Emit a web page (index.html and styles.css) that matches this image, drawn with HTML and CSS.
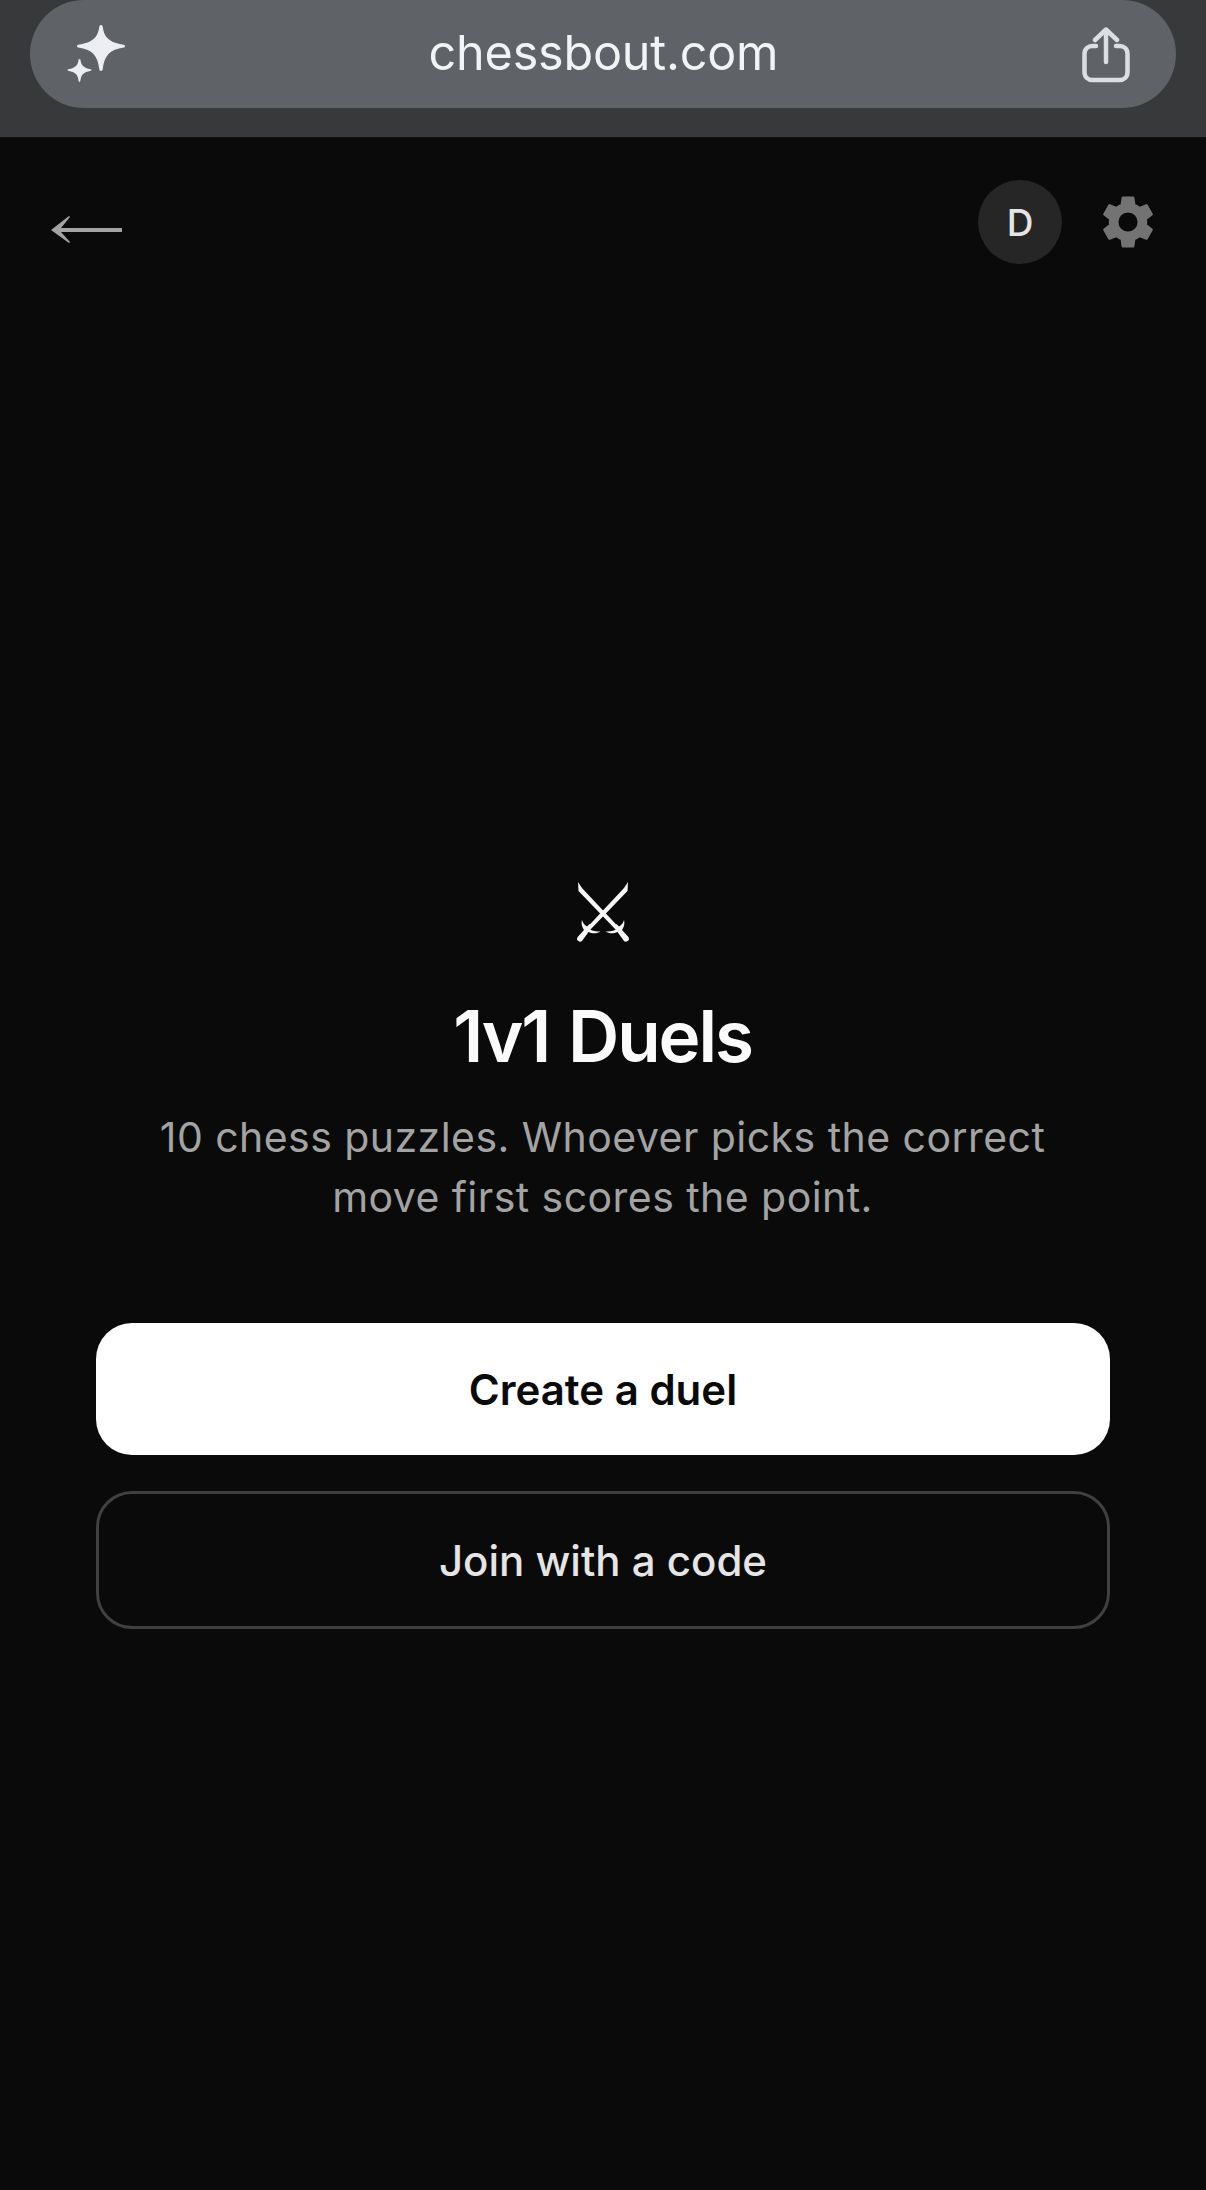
FILE: index.html
```html
<!DOCTYPE html>
<html lang="en">
<head>
    <meta charset="UTF-8">
    <meta name="viewport" content="width=device-width, initial-scale=1.0">
    <title>1v1 Duels</title>
    <link rel="stylesheet" href="styles.css">
</head>
<body>
    <div class="browser-bar">
        <div class="url-pill">
            <svg class="sparkle-icon" viewBox="0 0 58 58">
                <path fill="#eceef2" d="M34 0c1 0 1.600.7 1.800 2 1.400 10.500 6 15.200 21 17.800.8.200 1.200.7 1.200 1.400s-.4 1.200-1.200 1.400c-13.800 2.200-19.400 7.700-21 21.200-.2 1.500-.8 2.200-1.800 2.200s-1.600-.7-1.800-2.200c-1.600-13.500-7.200-19-21-21.200-.8-.2-1.200-.7-1.200-1.400s.4-1.200 1.200-1.400c15-2.600 19.600-7.300 21-17.800.2-1.300.8-2 1.800-2z" />
                <path fill="#eceef2" d="M12.500 34c.6 0 .9.400 1 1 .8 5.500 2.800 7.700 10.200 9.300.5.100.8.400.8.700s-.3.600-.8.700c-7.400 1.600-9.400 3.800-10.200 9.300-.1 1-.4 2-1 2s-.9-1-1-2c-.8-5.500-2.800-7.700-10.200-9.300-.5-.1-.8-.4-.8-.7s.3-.6.800-.7c7.400-1.600 9.400-3.800 10.200-9.300.1-.6.400-1 1-1z" />
            </svg>
            <span class="url-text">chessbout.com</span>
            <svg class="share-icon" viewBox="0 0 48 56" fill="none" stroke="#dcdee2" stroke-width="4.500" stroke-linecap="round" stroke-linejoin="round">
                <path d="M14 19h-3.500C6 19 2.500 22 2.500 27v18c0 5 3.500 8 8 8h27c4.500 0 8-3 8-8V27c0-5-3.500-8-8-8H34" />
                <path d="M24 35V3M13 13 24 2.500 35 13" />
            </svg>
        </div>
    </div>

    <div class="page">
        <div class="top-nav">
            <svg class="back-arrow" viewBox="0 0 72 28">
                <path fill="#a3a3a3" d="M0 14 18 0l1 1-9 11h61v4H10l9 10-1 1z" />
            </svg>
            <div class="top-actions">
                <div class="avatar">D</div>
                <svg class="gear-icon" viewBox="0 0 24 24">
                    <path fill="#737373" fill-rule="evenodd" d="M19.140 12.940c.04-.3.060-.61.060-.94 0-.32-.02-.64-.070-.94l2.030-1.580a.5.5 0 0 0 .12-.61l-1.920-3.320a.49.49 0 0 0-.59-.22l-2.390.96c-.5-.38-1.030-.7-1.620-.94l-.36-2.540a.48.48 0 0 0-.48-.41h-3.840a.47.47 0 0 0-.47.41l-.36 2.540c-.59.24-1.130.57-1.620.94l-2.390-.96a.48.48 0 0 0-.59.22L2.740 8.870a.47.47 0 0 0 .12.61l2.030 1.580c-.05.3-.09.63-.09.94s.02.64.070.94l-2.030 1.580a.5.5 0 0 0-.12.61l1.920 3.320c.12.22.37.29.59.22l2.390-.96c.5.38 1.030.7 1.620.94l.36 2.540c.05.24.24.41.48.41h3.840c.24 0 .44-.17.47-.41l.36-2.540c.59-.24 1.130-.56 1.620-.94l2.390.96c.22.080.47 0 .59-.22l1.920-3.320a.46.46 0 0 0-.12-.61l-2.010-1.580zM12 15.600A3.610 3.610 0 0 1 8.400 12 3.610 3.610 0 0 1 12 8.400a3.610 3.610 0 0 1 3.600 3.600 3.610 3.610 0 0 1-3.600 3.600z" />
                </svg>
            </div>
        </div>

        <div class="duel-intro">
            <svg class="swords-icon" viewBox="0 0 52 60">
                <g fill="#f5f5f5">
                    <path d="M51 0 50.500 9 13 48 10 45.500 47 6z" />
                    <path d="M1 0 1.500 9 39 48 42 45.500 5 6z" />
                    <path d="M5 38c.5 2.500 2.500 5 5 6.500l2.500-2.500 2.500 2.500-2.500 2.500c2 1.500 6 3 11 2.500-3 2-8 2.500-12 .5L5 59c-1.500 1.500-4 .5-5-1.500 0-1.500.5-2.500 1.500-3.500L7 48c-2-3-3-6.500-2-10z" />
                    <path d="M47 38c-.5 2.500-2.500 5-5 6.500L39.500 42 37 44.500l2.500 2.500c-2 1.500-6 3-11 2.500 3 2 8 2.500 12 .5L47 59c1.500 1.500 4 .5 5-1.500 0-1.500-.5-2.500-1.500-3.500L45 48c2-3 3-6.500 2-10z" />
                </g>
            </svg>
            <h1 class="duel-title">1v1 Duels</h1>
            <p class="duel-desc">10 chess puzzles. Whoever picks the correct<br>move first scores the point.</p>
        </div>

        <div class="duel-buttons">
            <button class="btn btn-primary">Create a duel</button>
            <button class="btn btn-outline">Join with a code</button>
        </div>
    </div>
</body>
</html>
```

FILE: styles.css
```css
* {
    box-sizing: border-box;
}
body {
    background: #0a0a0a;
    font-family: 'Inter', 'Liberation Sans', sans-serif;
    margin: 0;
    height: 2190px;
    overflow: hidden;
}
.browser-bar {
    background: #38393b;
    height: 138px;
    padding: 0 30px;
    border-bottom: 1px solid #111;
}
.url-pill {
    background: #5f6266;
    height: 108px;
    border-radius: 54px;
    display: flex;
    align-items: center;
    justify-content: space-between;
    padding: 0 46px 0 37px;
}
.sparkle-icon {
    width: 58px;
    height: 58px;
}
.url-text {
    color: #f2f3f5;
    font-size: 48.500px;
    letter-spacing: -0.2px;
    margin-top: -4px;
}
.share-icon {
    width: 48px;
    height: 56px;
    margin-top: 2px;
}
.page {
    padding: 42px 52px 0 51px;
}
.top-nav {
    display: flex;
    justify-content: space-between;
    align-items: flex-start;
}
.back-arrow {
    width: 72px;
    height: 28px;
    margin-top: 36px;
}
.top-actions {
    display: flex;
    align-items: center;
    gap: 40px;
}
.avatar {
    width: 84px;
    height: 84px;
    border-radius: 50%;
    background: #262626;
    color: #e5e5e5;
    font-size: 37px;
    font-weight: 500;
    display: flex;
    align-items: center;
    justify-content: center;
}
.gear-icon {
    width: 64px;
    height: 64px;
    margin: 0 -6px;
}
.duel-intro {
    margin: 618px -51px 0;
    text-align: center;
}
.swords-icon {
    display: block;
    width: 52px;
    height: 60px;
    margin: 0 auto;
}
.duel-title {
    color: #fafafa;
    font-size: 71px;
    font-weight: 600;
    letter-spacing: -2.100px;
    word-spacing: 3px;
    line-height: 80px;
    margin: 54px 0 0;
}
.duel-desc {
    color: #a3a3a3;
    font-size: 41px;
    line-height: 60px;
    letter-spacing: 0.45px;
    margin: 31px 0 0;
}
.duel-buttons {
    display: flex;
    flex-direction: column;
    gap: 36px;
    margin: 96px 44px 0 45px;
}
.btn {
    font-family: 'Inter', 'Liberation Sans', sans-serif;
    font-size: 42px;
    border-radius: 36px;
    width: 100%;
}
.btn-primary {
    height: 132px;
    background: #fff;
    color: #0a0a0a;
    font-weight: 600;
    border: none;
}
.btn-outline {
    height: 138px;
    background: transparent;
    color: #e5e5e5;
    font-weight: 500;
    border: 3px solid #404040;
}
```
